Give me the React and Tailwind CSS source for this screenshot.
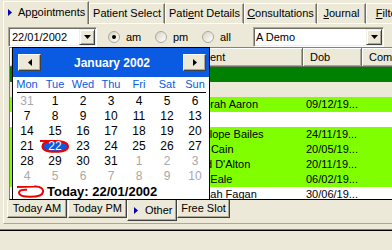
import React from 'react';

const raised =
  'bg-[#ece9d8] border border-t-white border-l-white border-r-[#404040] border-b-[#404040] shadow-[inset_-1px_-1px_0_#aca899]';
const sunken =
  'bg-white border border-t-[#aca899] border-l-[#aca899] border-r-white border-b-white shadow-[inset_1px_1px_0_#716f64,inset_-1px_-1px_0_#f1efe2]';

const rows = [
  { bg: 'bg-[#008000]' },
  { bg: 'bg-[#ece9d8]' },
  { bg: 'bg-[#80ff00]', name: 'Deborah Aaron', dob: '09/12/19...' },
  { bg: 'bg-white' },
  { bg: 'bg-[#80ff00]', name: 'Penelope Bailes', dob: '24/11/19...' },
  { bg: 'bg-[#80ff00]', name: 'Jane Cain', dob: '20/05/19...' },
  { bg: 'bg-[#80ff00]', name: "David D'Alton", dob: '20/11/19...' },
  { bg: 'bg-[#80ff00]', name: 'Ruth Eale', dob: '06/02/19...' },
  { bg: 'bg-white', name: 'Hannah Fagan', dob: '30/06/19...' },
];

const weeks = [
  [31, 1, 2, 3, 4, 5, 6],
  [7, 8, 9, 10, 11, 12, 13],
  [14, 15, 16, 17, 18, 19, 20],
  [21, 22, 23, 24, 25, 26, 27],
  [28, 29, 30, 31, 1, 2, 3],
  [4, 5, 6, 7, 8, 9, 10],
];

function DropButton() {
  return (
    <div className="w-[16px] h-[16px] bg-[#ece9d8] border border-t-[#f1efe2] border-l-[#f1efe2] border-r-[#404040] border-b-[#404040] shadow-[inset_1px_1px_0_#ffffff,inset_-1px_-1px_0_#aca899] flex items-center justify-center">
      <svg width="7" height="4" viewBox="0 0 7 4">
        <path d="M0 0H7L3.5 4Z" fill="#000" />
      </svg>
    </div>
  );
}

function Radio({ label, checked, width }) {
  return (
    <div className={`flex items-center shrink-0 ${width}`}>
      <span className="w-[12px] h-[12px] rounded-full border border-[#aca899] bg-[linear-gradient(135deg,#d6d3c6,#ffffff)] flex items-center justify-center">
        {checked && <span className="w-[4px] h-[4px] rounded-full bg-black" />}
      </span>
      <span className="ml-[6px]">{label}</span>
    </div>
  );
}

function TopTab({ width, children }) {
  return (
    <div
      className={`${width} h-[21px] shrink-0 border border-t-white border-l-white border-r-[#716f64] border-b-white shadow-[inset_-1px_0_0_#aca899] flex items-center justify-center pb-[1px]`}
    >
      {children}
    </div>
  );
}

function BottomTab({ width, active, children }) {
  return (
    <div
      className={`${width} ${
        active ? 'h-[21px]' : 'h-[18px]'
      } shrink-0 bg-[#ece9d8] border border-t-0 border-l-white border-r-[#404040] border-b-[#404040] shadow-[inset_-1px_-1px_0_#aca899] flex items-center justify-center`}
    >
      {children}
    </div>
  );
}

function NavButton({ right }) {
  return (
    <div className={`w-[23px] h-[17px] ${raised} flex items-center justify-center`}>
      <svg width="4" height="7" viewBox="0 0 4 7">
        <path d={right ? 'M0 0L4 3.5L0 7Z' : 'M4 0L0 3.5L4 7Z'} fill="#000" />
      </svg>
    </div>
  );
}

function Calendar() {
  return (
    <div className="absolute left-[12px] top-[47px] w-[198px] h-[153px] border border-black bg-white z-20 flex flex-col">
      <div className="h-[29px] shrink-0 bg-[#0a5ae2] flex items-center justify-between pl-[5px] pr-[3px]">
        <NavButton />
        <span className="text-white font-bold text-[12px]">January 2002</span>
        <NavButton right />
      </div>
      <div className="flex h-[15px] items-center text-[#0a5ae2] text-[11px]">
        {['Mon', 'Tue', 'Wed', 'Thu', 'Fri', 'Sat', 'Sun'].map((d) => (
          <span key={d} className="w-[28px] text-center">
            {d}
          </span>
        ))}
      </div>
      <div className="h-[1px] bg-black ml-[4px] mr-[3px]" />
      {weeks.map((week, w) => (
        <div key={w} className="flex h-[15px] items-center text-[12px]">
          {week.map((d, i) => {
            const other = (w === 0 && d > 7) || (w >= 4 && d < 15);
            const selected = w === 3 && d === 22;
            return (
              <div
                key={i}
                className={`relative w-[28px] h-[15px] flex items-center justify-center ${
                  other ? 'text-[#a8a8a8]' : 'text-black'
                }`}
              >
                {selected && (
                  <svg className="absolute left-0 top-0 overflow-visible" width="28" height="15" viewBox="0 0 28 15">
                    <path
                      d="M-1 3L12 3C20 2.5 27 4.5 27 8.5C27 12 21 13.8 14 13.8C7 13.8 1.5 12 1.5 8.5C1.5 5.5 5 3.8 9 3.5"
                      fill="#0a5ae2"
                      stroke="#f00000"
                      strokeWidth="2"
                    />
                  </svg>
                )}
                <span className={`relative ${selected ? 'text-white' : ''}`}>{d}</span>
              </div>
            );
          })}
        </div>
      ))}
      <div className="flex h-[16px] items-center pl-[4px]">
        <svg width="27" height="13" viewBox="0 0 27 13">
          <path
            d="M0 2L17 1.5C24 1 26.5 4 26 7C25.5 10.5 20 11.8 13 11.8C6 11.8 2 10.3 2 7.8C2 5.3 6 4.3 10 4.8"
            fill="none"
            stroke="#f00000"
            strokeWidth="2"
          />
        </svg>
        <span className="ml-[3px] font-bold text-[13px]">Today: 22/01/2002</span>
      </div>
    </div>
  );
}

export default function App() {
  return (
    <div className="relative w-[392px] h-[250px] overflow-hidden bg-[#ece9d8] text-[11px] leading-none text-black font-['Liberation_Sans',Arial,sans-serif]">
      {/* page tabs */}
      <div className="flex h-[24px] items-end">
        <div className="w-[3px] shrink-0" />
        <div className="w-[86px] h-[23px] shrink-0 bg-[#ece9d8] border border-b-0 border-t-white border-l-white border-r-[#716f64] shadow-[inset_-1px_0_0_#aca899] flex items-center pl-[4px] pb-[2px]">
          <svg width="4" height="7" viewBox="0 0 4 7">
            <path d="M0 0L4 3.5L0 7Z" fill="#0000b0" />
          </svg>
          <span className="ml-[6px]">
            Ap<u>p</u>ointments
          </span>
        </div>
        <TopTab width="w-[76px]">Patient Select</TopTab>
        <TopTab width="w-[79px]">
          <span>
            Pati<u>e</u>nt Details
          </span>
        </TopTab>
        <TopTab width="w-[73px]">
          <span>
            <u>C</u>onsultations
          </span>
        </TopTab>
        <TopTab width="w-[49px]">
          <span>
            <u>J</u>ournal
          </span>
        </TopTab>
        <TopTab width="w-[44px]">
          <span>
            <u>F</u>ilter
          </span>
        </TopTab>
        <div className="flex-1 h-[21px] border-b border-b-white" />
      </div>

      {/* tab page */}
      <div className="ml-[3px] h-[200px] border-l border-b border-l-white border-b-[#aca899] flex flex-col">
        <div className="h-[23px] shrink-0 flex items-start pt-[3px]">
          <div className={`ml-[4px] w-[89px] h-[20px] ${sunken} flex items-center justify-between pl-[3px] pr-[1px]`}>
            <span>22/01/2002</span>
            <DropButton />
          </div>
          <div className="ml-[11px] h-[20px] flex items-center">
            <Radio label="am" checked width="w-[47px]" />
            <Radio label="pm" width="w-[47px]" />
            <Radio label="all" width="w-[51px]" />
          </div>
          <div className={`w-[131px] h-[20px] ${sunken} flex items-center justify-between pl-[2px] pr-[1px]`}>
            <span>A Demo</span>
            <DropButton />
          </div>
        </div>

        <div className="ml-[5px] h-[153px] shrink-0 overflow-hidden bg-white border-t border-l border-b border-t-[#808080] border-l-[#808080] border-b-black">
          <div className="flex h-[19px]">
            {[
              ['w-[174px]', 'Time'],
              ['w-[119px]', 'Patient'],
              ['w-[59px]', 'Dob'],
              ['w-[60px]', 'Comments'],
            ].map(([w, label]) => (
              <div
                key={label}
                className={`${w} shrink-0 h-[19px] bg-[#ece9d8] border-r border-b border-r-[#716f64] border-b-[#716f64] shadow-[inset_1px_1px_0_#ffffff,inset_-1px_-1px_0_#aca899] flex items-center pl-[7px] overflow-hidden whitespace-nowrap`}
              >
                {label}
              </div>
            ))}
          </div>
          {rows.map((r, i) => (
            <div key={i} className={`flex h-[15px] items-center ${r.bg}`}>
              <div className="w-[174px] shrink-0" />
              <div className="w-[119px] shrink-0 whitespace-nowrap overflow-hidden">{r.name}</div>
              <div className="w-[59px] shrink-0 pl-[3px] whitespace-nowrap">{r.dob}</div>
              <div className="flex-1" />
            </div>
          ))}
        </div>

        <div className="h-[23px] shrink-0 flex items-start pl-[3px]">
          <BottomTab width="w-[60px]">Today AM</BottomTab>
          <div className="w-[1px] shrink-0" />
          <BottomTab width="w-[59px]">Today PM</BottomTab>
          <BottomTab width="w-[50px]" active>
            <span className="flex items-center w-full pl-[6px] pt-[1px]">
              <svg width="4" height="7" viewBox="0 0 4 7">
                <path d="M0 0L4 3.5L0 7Z" fill="#0000b0" />
              </svg>
              <span className="ml-[7px]">Other</span>
            </span>
          </BottomTab>
          <BottomTab width="w-[53px]">Free Slot</BottomTab>
        </div>
      </div>

      {/* status bar edge */}
      <div className="mt-[5px] h-[1px] bg-[#808080]" />
      <div className="h-[1px] bg-black" />

      <Calendar />
    </div>
  );
}
